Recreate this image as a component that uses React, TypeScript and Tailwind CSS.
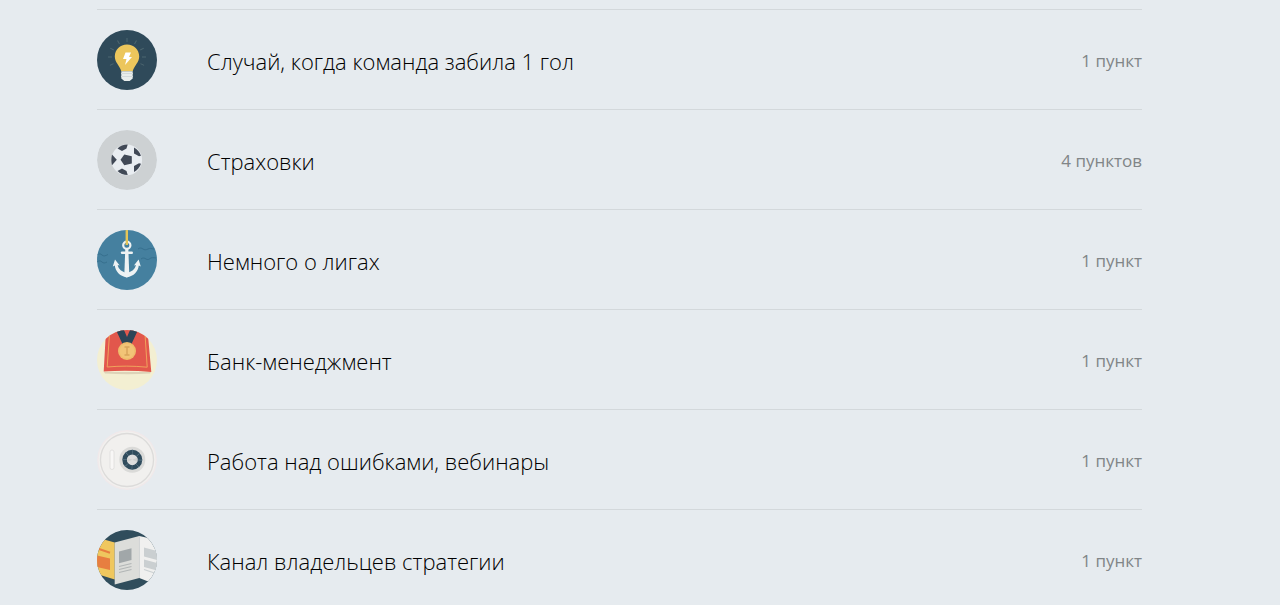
import type { ReactNode } from "react";

type Topic = {
  id: string;
  title: string;
  count: string;
  icon: ReactNode;
};

const RAY_ANGLES = [-116, -90, -62, -30, 0, 30, 62, 90, 116];

function BulbIcon() {
  return (
    <>
      <rect width="60" height="60" fill="#2f4a5a" />
      <g stroke="#4d6670" strokeWidth="1">
        {RAY_ANGLES.map((angle) => (
          <path key={angle} d="M30 8v4" transform={`rotate(${angle} 30 27)`} />
        ))}
      </g>
      <path
        d="M30 14.5c-7 0-12.2 5.3-12.2 12 0 6 4.7 8.5 6.5 14.8h11.4c1.8-6.3 6.5-8.8 6.5-14.8 0-6.7-5.2-12-12.2-12z"
        fill="#ecc65c"
      />
      <path d="M28.5 22.5h5.5l-2 4.5h3l-7 8 1.5-6h-3.5z" fill="#fff" />
      <path d="M24.3 41.3h11.4v7.2l-3 2.5h-5.4l-3-2.500z" fill="#e8edec" />
      <path d="M24 43.5h12M24 46.5h12" stroke="#d3dadb" strokeWidth="1" />
    </>
  );
}

function BallIcon() {
  return (
    <>
      <circle cx="30" cy="30" r="30" fill="#cdd1d3" />
      <circle cx="29.7" cy="29.8" r="15.4" fill="#e9edf1" />
      <g fill="#414956">
        <path d="M23.5 29.8l3.8-5.3 7.5 1.8v7.2l-7.5 1.8z" />
        <path d="M20.5 18.5c2.5-2.5 6-4 10.2-4l-1.2 4-4.5 2.500z" />
        <path d="M15 24.5l4.8 5.3-4.8 5.5c-.9-3.6-.9-7.2 0-10.8z" />
        <path d="M20.5 41l4.5-2.5 4.5 2.5 1.2 4c-4.2 0-7.7-1.5-10.2-4z" />
        <path d="M37 17.5c3.3 1.8 5.8 4.6 7 8.2l-2 .6-5-2.8z" />
        <path d="M37 42c3.3-1.8 5.8-4.6 7-8.2l-2-.6-5 2.8z" />
      </g>
    </>
  );
}

function AnchorIcon() {
  return (
    <>
      <rect width="60" height="60" fill="#45809f" />
      <path
        d="M41 19c2-1.5 3.5-1 5 0s3 1 5 0 3.5-.5 6 0M44 29c2-1.5 3.5-1 5 0s3 .5 4-.5 3.5-1 6-.5M0 25c2-1.5 3.5-1.5 5 0s3.5 1 6-.5M0 32c2-1.5 3.5-1.5 5 0s3 1 5 0"
        fill="none"
        stroke="#376f8e"
        strokeWidth="1"
      />
      <circle cx="29.8" cy="15.2" r="3.6" fill="none" stroke="#eef2f3" strokeWidth="2.2" />
      <path d="M29.8 0v15" stroke="#e5c557" strokeWidth="2.4" />
      <path d="M28.3 18.5h3l1 26.5-2.5 2.5-2.5-2.500z" fill="#eef2f3" />
      <path d="M25 22.8h9.8" stroke="#eef2f3" strokeWidth="2.4" strokeLinecap="round" />
      <path
        d="M18 29.5l4.7 6-2-.4c.8 4.3 4.2 6.7 9.1 8 4.9-1.3 8.3-3.7 9.1-8l-2 .4 4.7-6 2.2 7-2-.9c-.8 6-4.8 10.6-12 11.9-7.2-1.3-11.2-5.9-12-11.9l-2 .9z"
        fill="#eef2f3"
      />
    </>
  );
}

function MedalIcon() {
  return (
    <>
      <rect width="60" height="60" fill="#f3efd2" />
      <path d="M7 42l1 1.5c15 1 30 1 45 0l1-1.500z" fill="#ddd3b8" />
      <path d="M9 0h41.5l3.8 42c-16-1.5-32-1.5-47.6-.5z" fill="#e2574c" />
      <path d="M12.5 4l-2.3 33c13-1.2 26-1.2 40 .2L48 4" fill="none" stroke="#efa35c" strokeWidth="1" />
      <path d="M19 0h8l3 7 3-7h8l-6.5 14h-9z" fill="#2d4557" />
      <circle cx="30" cy="21" r="9" fill="#efbd6c" />
      <circle cx="30" cy="21" r="7.3" fill="#f2c477" />
      <path d="M27.5 17h5M27.5 25h5M30 17v8" stroke="#d8a45b" strokeWidth="1.5" />
    </>
  );
}

function SafeIcon() {
  return (
    <>
      <circle cx="30" cy="30" r="30" fill="#f0e9ea" />
      <circle cx="30" cy="30" r="28.5" fill="#f1f0ee" />
      <circle cx="30" cy="30" r="26.5" fill="none" stroke="#dcdbda" strokeWidth="1.3" />
      <rect x="13" y="20" width="4" height="19.5" rx="2" fill="#f8f7f6" stroke="#dddcda" strokeWidth=".8" />
      <circle cx="35.3" cy="29.8" r="13" fill="#dadad8" />
      <circle cx="35.3" cy="29.8" r="7.7" fill="#dedede" stroke="#304c5d" strokeWidth="4.6" />
      <circle cx="35.3" cy="29.8" r="7.7" fill="none" stroke="#6b8492" strokeWidth="4.6" strokeDasharray=".5 5.547" />
      <path d="M35.3 29.8l-5-2v4zM35.3 29.8l5-2v4z" fill="#cfd0cf" />
    </>
  );
}

function NewspaperIcon() {
  return (
    <>
      <rect width="60" height="60" fill="#304d5c" />
      <path d="M0 7.5l17.7 5V49.5L0 44z" fill="#efc75e" />
      <path d="M0 25.5l13 3V40L0 37z" fill="#e77e40" />
      <path d="M2 19l11 3.7" stroke="#e77e40" strokeWidth="2" />
      <path d="M17.7 12.5L42.3 6v42l-24.6 6.500z" fill="#dcddda" />
      <path d="M42.3 6L60 10v45l-17.7-7z" fill="#f0f0ef" />
      <path d="M22 21.5l12.5-3.3V30L22 33.2z" fill="#a1a7a9" />
      <path d="M22 36.5l12.5-3M22 39.5l12.5-3M22 42.5l12.5-3" stroke="#b2b6b6" strokeWidth="1.2" />
      <path d="M47 17.5l13 3.5v9l-13-3.5zM47 29.5l13 3.5v7.5L47 37z" fill="#cacfd1" />
      <path d="M47 39.5l12 4" stroke="#cacfd1" strokeWidth="1.2" />
      <path d="M42.3 6v42" stroke="#dcdddb" strokeWidth=".7" />
    </>
  );
}

const TOPICS: Topic[] = [
  { id: "one-goal", title: "Случай, когда команда забила 1 гол", count: "1 пункт", icon: <BulbIcon /> },
  { id: "insurance", title: "Страховки", count: "4 пунктов", icon: <BallIcon /> },
  { id: "leagues", title: "Немного о лигах", count: "1 пункт", icon: <AnchorIcon /> },
  { id: "bankroll", title: "Банк-менеджмент", count: "1 пункт", icon: <MedalIcon /> },
  { id: "webinars", title: "Работа над ошибками, вебинары", count: "1 пункт", icon: <SafeIcon /> },
  { id: "channel", title: "Канал владельцев стратегии", count: "1 пункт", icon: <NewspaperIcon /> },
];

export default function App() {
  return (
    <main className="min-h-screen bg-[#e6ebef] pt-[9px] pl-[97px] pr-[138px] font-['Open_Sans','Noto_Sans',sans-serif]">
      <ul>
        {TOPICS.map((topic) => (
          <li key={topic.id} className="border-t border-[#d3d8db]">
            <a href={`#${topic.id}`} className="flex items-center pt-5 pb-[19px]">
              <svg viewBox="0 0 60 60" className="size-15 shrink-0 rounded-full" aria-hidden="true">
                {topic.icon}
              </svg>
              <span className="ml-[50px] flex-1 pt-0.5 text-[22px] font-light text-black">
                {topic.title}
              </span>
              <span className="pt-0.5 text-[17px] text-[#818587]">{topic.count}</span>
            </a>
          </li>
        ))}
      </ul>
    </main>
  );
}
